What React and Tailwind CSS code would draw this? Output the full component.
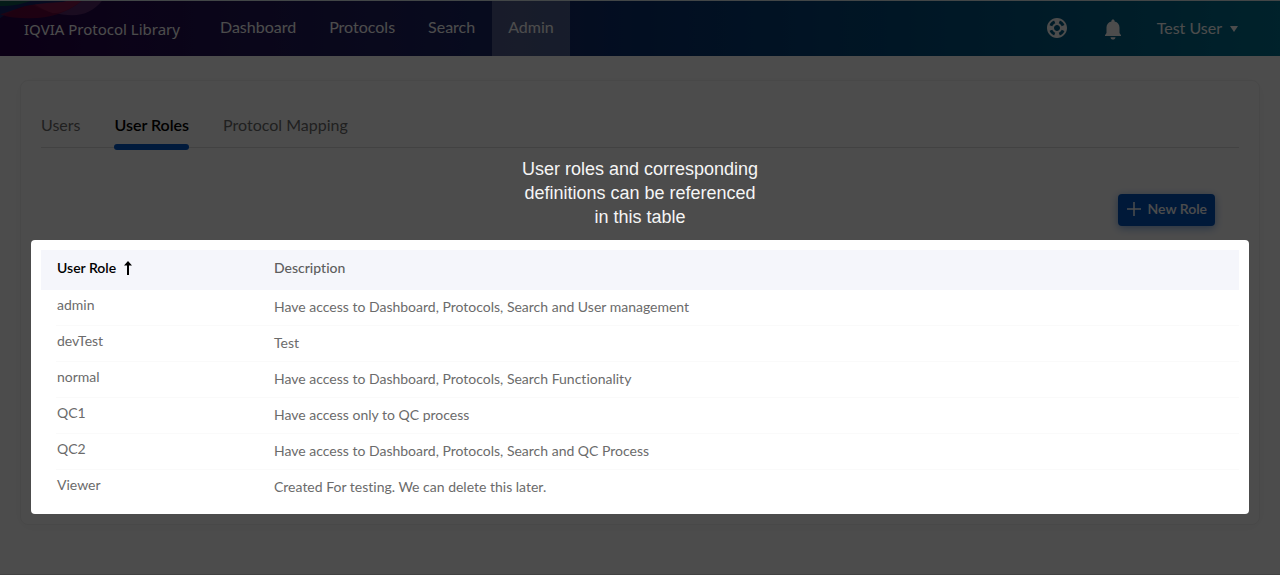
const navItems = ["Dashboard", "Protocols", "Search", "Admin"];
const tabs = ["Users", "User Roles", "Protocol Mapping"];
const roles = [
  ["admin", "Have access to Dashboard, Protocols, Search and User management"],
  ["devTest", "Test"],
  ["normal", "Have access to Dashboard, Protocols, Search Functionality"],
  ["QC1", "Have access only to QC process"],
  ["QC2", "Have access to Dashboard, Protocols, Search and QC Process"],
  ["Viewer", "Created For testing. We can delete this later."],
];

function HelpIcon() {
  return (
    <svg viewBox="0 0 24 24" className="size-6" fill="currentColor" aria-hidden="true">
      <path d="M12 2C6.48 2 2 6.48 2 12s4.48 10 10 10 10-4.48 10-10S17.52 2 12 2zm7.46 7.12l-2.78 1.15c-.51-1.36-1.58-2.44-2.95-2.94l1.15-2.78c2.1.8 3.77 2.47 4.58 4.57zM12 15c-1.66 0-3-1.34-3-3s1.34-3 3-3 3 1.34 3 3-1.34 3-3 3zM9.13 4.54l1.17 2.78c-1.38.5-2.47 1.59-2.98 2.97L4.54 9.13c.81-2.11 2.48-3.78 4.59-4.59zM4.54 14.87l2.78-1.15c.51 1.38 1.59 2.46 2.97 2.96l-1.17 2.78c-2.1-.81-3.77-2.48-4.58-4.59zm10.34 4.59l-1.15-2.78c1.37-.51 2.45-1.59 2.95-2.97l2.78 1.17c-.81 2.1-2.48 3.77-4.58 4.58z" />
    </svg>
  );
}

function BellIcon() {
  return (
    <svg viewBox="0 0 24 24" className="size-6" fill="currentColor" aria-hidden="true">
      <path d="M12 22.5c1.3 0 2.4-.9 2.5-2.3h-5c.1 1.4 1.2 2.3 2.5 2.3zM18.5 16v-5.5c0-3-1.7-5.200-4.900-6V4c0-.9-.7-1.600-1.600-1.600s-1.600.7-1.600 1.600v.5c-3.200.8-4.900 3-4.900 6V16L4 18.200v.9h16v-.9z" />
    </svg>
  );
}

function Header() {
  return (
    <header className="relative flex h-14 items-center border-t border-[#dce9ee] bg-linear-to-r from-[#260048] via-[#083070] to-[#00728f] pr-9 pb-0.5 pl-6 text-white">
      <svg viewBox="0 0 110 20" className="absolute top-0 left-0 w-28" aria-hidden="true">
        <path d="M32 4C44 10 58 14 71 14c12 0 22-5 29-14H40z" fill="#8a4a8c" fillOpacity="0.5" />
        <path d="M0 17C10 10 22 4 35 4c10-1 20 0 30-4H0z" fill="#14246c" />
        <path d="M0 13C10 11 20 5 34 3.500L80 0C66 12 48 17 30 17 18 17 8 16 0 13z" fill="#780838" fillOpacity="0.8" />
        <path d="M34 3.500C48 1 58 2 66 0h14C70 8 60 12 52 12 46 10 40 7 34 3.500z" fill="#8a1c50" fillOpacity="0.8" />
        <path d="M0 5C12 5 22 3 30 0H0z" fill="#0f5a50" />
      </svg>
      <a href="#home" className="relative pt-1 font-['Noto_Sans',sans-serif] text-[15px] whitespace-nowrap">
        IQVIA Protocol Library
      </a>
      <nav className="-mb-0.5 ml-6 flex gap-px self-stretch text-base">
        {navItems.map((item) => (
          <a
            key={item}
            href={"#" + item.toLowerCase()}
            className={"flex items-center px-4 pb-1 " + (item === "Admin" ? "bg-white/25" : "")}
          >
            {item}
          </a>
        ))}
      </nav>
      <div className="ml-auto flex items-center">
        <button type="button" aria-label="Help" className="mr-8">
          <HelpIcon />
        </button>
        <button type="button" aria-label="Notifications" className="mr-8 pt-0.5">
          <BellIcon />
        </button>
        <button type="button" className="flex items-center gap-0.5 text-base whitespace-nowrap">
          Test User
          <svg viewBox="0 0 20 20" className="size-5" fill="currentColor" aria-hidden="true">
            <path d="M6 8h8l-4 6z" />
          </svg>
        </button>
      </div>
    </header>
  );
}

export default function App() {
  return (
    <div className="min-h-screen overflow-hidden border-b border-[#424242] bg-white font-[Lato,sans-serif] [font-variant-ligatures:none]">
      <Header />
      <main className="mx-5 mt-6 rounded-lg border border-[#f0f0f0] px-5 pb-2.5 shadow-[0_2px_16px_rgba(0,0,0,0.04)]">
        <div role="tablist" className="flex gap-[34px] border-b border-[#dddddd] pt-8 text-base">
          {tabs.map((tab) => (
            <button
              key={tab}
              type="button"
              role="tab"
              aria-selected={tab === "User Roles"}
              className={
                "relative pb-2.5 " + (tab === "User Roles" ? "font-semibold text-black" : "text-[#6d6d6d]")
              }
            >
              {tab}
              {tab === "User Roles" && (
                <span className="absolute inset-x-0 -bottom-[3px] h-1.5 rounded-full bg-[#0058c8]" />
              )}
            </button>
          ))}
        </div>
        <div className="flex justify-end pt-[46px] pr-6 pb-6">
          <button
            type="button"
            className="flex h-8 items-center gap-1.5 rounded bg-[#0055c0] px-2 pb-0.5 text-sm font-semibold text-white shadow-[0_2px_8px_rgba(0,85,200,0.5)]"
          >
            <svg viewBox="0 0 16 16" className="size-4" fill="none" stroke="currentColor" strokeWidth="1.5" aria-hidden="true">
              <path d="M8 1v14M1 8h14" />
            </svg>
            New Role
          </button>
        </div>
        <section className="relative -mx-2.5 -mt-2.5 rounded bg-white px-2.5 pt-2.5 pb-2 shadow-[0_0_0_9999px_rgba(0,0,0,0.7)]">
          <p className="absolute inset-x-0 bottom-full mb-[11px] text-center font-['Liberation_Sans',sans-serif] text-lg leading-6 text-[#f5f5f5]">
            User roles and corresponding
            <br />
            definitions can be referenced
            <br />
            in this table
          </p>
          <table className="w-full text-left text-sm text-[#6b6b6b]">
            <thead>
              <tr className="h-10 bg-[#f5f6fb]">
                <th scope="col" className="w-[217px] px-4 pb-1 font-semibold text-black">
                  <button type="button" className="flex items-center gap-1">
                    User Role
                    <svg viewBox="0 0 16 16" className="size-4" fill="currentColor" aria-hidden="true">
                      <path d="M8 1l4 4.500H9V15H7V5.500H4z" />
                    </svg>
                  </button>
                </th>
                <th scope="col" className="px-4 pb-1 font-medium text-[#5e5e5e]">
                  Description
                </th>
              </tr>
            </thead>
            <tbody>
              {roles.map(([role, description], index) => (
                <tr
                  key={role}
                  className={
                    "h-9 " +
                    (index < roles.length - 1
                      ? "bg-linear-to-t from-[#fafafa] from-[1px] to-transparent to-[1px] bg-size-[calc(100%-15px)_100%] bg-right bg-no-repeat"
                      : "")
                  }
                >
                  <td className="pb-1.5 pl-4">{role}</td>
                  <td className="px-4 pb-0.5">{description}</td>
                </tr>
              ))}
            </tbody>
          </table>
        </section>
      </main>
    </div>
  );
}
